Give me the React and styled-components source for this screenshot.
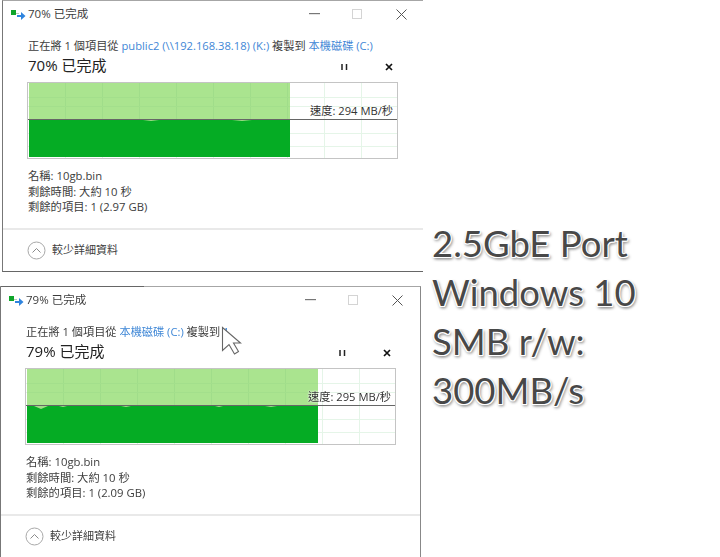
import React from "react";
import styled, { createGlobalStyle } from "styled-components";

const Global = createGlobalStyle`
  html, body { margin: 0; padding: 0; background: #fff; overflow: hidden; }
  body { font-family: "Open Sans", "Noto Sans CJK TC", sans-serif; }
`;

const Page = styled.div`
  width: 720px;
  height: 557px;
  display: flex;
  overflow: hidden;
  background: #fff;
`;

const LeftColumn = styled.div`
  width: 432px;
  flex: none;
  display: flex;
  flex-direction: column;
  gap: 14px;
  filter: blur(0.35px);
`;

const Window = styled.section`
  position: relative;
  box-sizing: border-box;
  flex: none;
  margin-left: ${(p) => p.$left}px;
  width: ${(p) => p.$width}px;
  height: ${(p) => p.$height}px;
  background: #fff;
  border-left: 1px solid #777;
  border-top: 1px solid #a6a6a6;
  border-right: ${(p) => (p.$closedRight ? "1px solid #888" : "none")};
  border-bottom: ${(p) => (p.$closedBottom ? "1px solid #666" : "none")};
  color: #333;

  &::before {
    content: "";
    display: ${(p) => (p.$closedRight ? "block" : "none")};
    position: absolute;
    top: -1px;
    left: 0;
    width: 143px;
    height: 1px;
    background: #666;
  }
`;

const TitleBar = styled.header`
  height: 26px;
  display: flex;
  align-items: center;
  padding-left: 8px;
  font-size: 11.5px;
  color: #3c3c3c;
`;

const TitleText = styled.span`
  margin: -3px 0 0 2px;
  flex: 1;
`;

const Controls = styled.div`
  display: flex;
  align-items: center;
  margin-right: ${(p) => p.$right}px;
`;

const ControlBox = styled.span`
  width: 43.5px;
  height: 12px;
  display: flex;
  justify-content: center;
  align-items: center;
`;

const Body = styled.div`
  padding: 11px 0 0 24px;
  width: 371px;
`;

const CopyLine = styled.div`
  padding-left: 1px;
  font-size: 11.2px;
  line-height: 16px;
  height: 16px;
  white-space: nowrap;
  color: #3c3c3c;
`;

const Link = styled.span`
  color: #3f87d6;
`;

const HeadingRow = styled.div`
  height: 20px;
  display: flex;
  align-items: center;
  justify-content: space-between;
  margin-bottom: 8px;
  padding-left: 1px;
`;

const Heading = styled.h2`
  margin: 0;
  font-size: 15px;
  font-weight: 400;
  color: #222;
`;

const HeadingActions = styled.div`
  display: flex;
  gap: 37px;
  margin-right: 5px;
  padding-top: 5px;
  align-items: center;
`;

const ChartFrame = styled.div`
  position: relative;
  width: 371px;
  height: 77px;
`;

const Speed = styled.span`
  position: absolute;
  right: 5px;
  top: 20.5px;
  font-size: 11.2px;
  line-height: 15px;
  color: #333;
  white-space: nowrap;
  text-shadow: 0 0 2px #fff, 0 0 2px #fff;
`;

const Details = styled.div`
  margin-top: 9px;
  padding-left: 1px;
  font-size: 11.3px;
  line-height: 15.5px;
  color: #3c3c3c;
`;

const Divider = styled.hr`
  margin: 13px 0 0;
  border: 0;
  height: 2px;
  background: #e9e9e9;
`;

const Footer = styled.div`
  display: flex;
  align-items: center;
  gap: 6px;
  padding: 11px 0 0 24px;
  font-size: 11px;
  color: #3c3c3c;

  span {
    margin-top: -2px;
  }
`;

const Cursor = styled.svg`
  position: absolute;
  left: 219px;
  top: 39px;
`;

const Banner = styled.div`
  padding-top: 219px;
  font-family: "Lato", "Open Sans", sans-serif;
  font-size: 36.5px;
  line-height: 49px;
  color: #484848;
  white-space: nowrap;
  text-shadow: 0 0 1px #fff, 1px 0 0 #fff, -1px 0 0 #fff, 0 1px 0 #fff, 0 -1px 0 #fff,
    1px 1px 0 #fff, -1px 1px 0 #fff, 0 2px 3px #999, 2px 2px 3px #999;
`;

const ProgressIcon = () => (
  <svg width="15" height="12" viewBox="0 0 15 12">
    <rect x="0" y="2" width="5" height="5" fill="#0fa52a" />
    <rect x="5" y="5" width="3" height="1" fill="#b9c9b9" />
    <path d="M6 7h4V4l4.5 4L10 12V9H6z" fill="#2f84de" />
  </svg>
);

const MinIcon = () => (
  <svg width="11" height="2"><rect width="11" height="1.2" fill="#777" /></svg>
);
const MaxIcon = () => (
  <svg width="11" height="11"><rect x=".5" y=".5" width="9" height="9" fill="none" stroke="#d4d4d4" /></svg>
);
const CloseIcon = () => (
  <svg width="11" height="11"><path d="M.5.5l10 10M10.5.5l-10 10" stroke="#555" strokeWidth="1" fill="none" /></svg>
);
const PauseIcon = () => (
  <svg width="7" height="8"><path d="M1 1v6M5.5 1v6" stroke="#222" strokeWidth="1.5" /></svg>
);
const StopIcon = () => (
  <svg width="8" height="8"><path d="M1 1l6 6M7 1L1 7" stroke="#111" strokeWidth="1.7" /></svg>
);
const CollapseIcon = () => (
  <svg width="19" height="19" viewBox="0 0 19 19">
    <circle cx="9.5" cy="9.5" r="8.5" fill="none" stroke="#a8a8a8" />
    <path d="M5.5 11.5l4-4 4 4" fill="none" stroke="#8a8a8a" />
  </svg>
);

const SpeedChart = ({ fill, dips }) => {
  const w = 371;
  const h = 77;
  const lineY = 37;
  const vs = [38, 75, 112, 149, 186, 223, 260, 297, 334];
  const hs = [15, 24, 51, 64];
  return (
    <svg width={w} height={h} viewBox={`0 0 ${w} ${h}`} style={{ display: "block" }}>
      <rect x=".5" y=".5" width={w - 1} height={h - 1} fill="#fff" stroke="#c4c4c4" />
      {vs.map((x) => <rect key={x} x={x} y="1" width="1" height={h - 2} fill="#e5f5e8" />)}
      {hs.map((y) => <rect key={y} x="1" y={y} width={w - 2} height="1" fill="#e5f5e8" />)}
      <rect x="2" y="1" width={fill} height={lineY - 1} fill="#aae48f" />
      {vs.filter((x) => x < fill).map((x) => <rect key={x} x={x} y="1" width="1" height={lineY - 1} fill="#a0dd8a" />)}
      {hs.filter((y) => y < lineY).map((y) => <rect key={y} x="2" y={y} width={fill} height="1" fill="#a3df8c" />)}
      <rect x="2" y={lineY} width={fill} height={h - lineY - 2} fill="#05ac24" />
      {dips.map(([x, d, y2 = 1]) => <path key={x} d={`M${x} ${lineY + 1}l${d / 2} ${y2}l${d / 2} -${y2}z`} fill="#9fdc88" />)}
      <rect x="1" y={lineY} width={w - 2} height="1" fill="#666" />
    </svg>
  );
};

const CopyWindow = ({ left, width, height, closedRight, closedBottom, controlsRight, percent, line, speed, fill, dips, remaining, children }) => (
  <Window $left={left} $width={width} $height={height} $closedRight={closedRight} $closedBottom={closedBottom}>
    <TitleBar>
      <ProgressIcon />
      <TitleText>{percent}% 已完成</TitleText>
      <Controls $right={controlsRight}>
        <ControlBox><MinIcon /></ControlBox>
        <ControlBox><MaxIcon /></ControlBox>
        <ControlBox><CloseIcon /></ControlBox>
      </Controls>
    </TitleBar>
    <Body>
      <CopyLine>{line}</CopyLine>
      <HeadingRow>
        <Heading>{percent}% 已完成</Heading>
        <HeadingActions>
          <PauseIcon />
          <StopIcon />
        </HeadingActions>
      </HeadingRow>
      <ChartFrame>
        <SpeedChart fill={fill} dips={dips} />
        <Speed>速度: {speed} MB/秒</Speed>
      </ChartFrame>
      <Details>
        <div>名稱: 10gb.bin</div>
        <div>剩餘時間: 大約 10 秒</div>
        <div>剩餘的項目: 1 ({remaining} GB)</div>
      </Details>
    </Body>
    <Divider />
    <Footer>
      <CollapseIcon />
      <span>較少詳細資料</span>
    </Footer>
    {children}
  </Window>
);

export default function App() {
  return (
    <Page>
      <Global />
      <LeftColumn>
        <CopyWindow
          left={2}
          width={421}
          height={272}
          closedBottom
          controlsRight={0}
          percent={70}
          speed={294}
          fill={261}
          dips={[[116, 16], [205, 20]]}
          remaining="2.97"
          line={<>正在將 1 個項目從 <Link>public2 (\\192.168.38.18) (K:)</Link> 複製到 <Link>本機磁碟 (C:)</Link></>}
        />
        <CopyWindow
          left={0}
          width={421}
          height={272}
          closedRight
          controlsRight={1}
          percent={79}
          speed={295}
          fill={291}
          dips={[[9, 14, 3], [34, 8], [96, 10], [190, 8], [240, 12]]}
          remaining="2.09"
          line={<>正在將 1 個項目從 <Link>本機磁碟 (C:)</Link> 複製到 <Link>1</Link></>}
        >
          <Cursor width="22" height="32" viewBox="0 0 22 32">
            <path d="M2.5 1.5V24.5L9 18.5L14.5 28L18.5 25.5L13.5 17H20.5Z" fill="#fff" stroke="#666" strokeWidth="1.1" />
          </Cursor>
        </CopyWindow>
      </LeftColumn>
      <Banner>
        <div>2.5GbE Port</div>
        <div>Windows 10</div>
        <div>SMB r/w:</div>
        <div>300MB/s</div>
      </Banner>
    </Page>
  );
}
